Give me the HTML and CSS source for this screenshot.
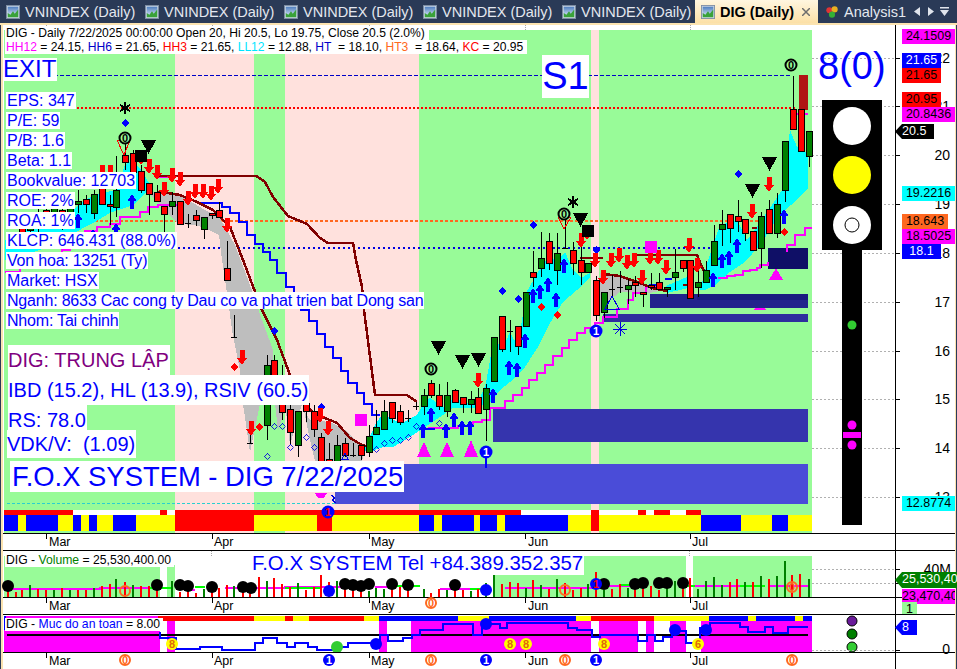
FILE: index.html
```html
<!DOCTYPE html>
<html lang="en">
<head>
<meta charset="utf-8">
<title>DIG (Daily)</title>
<link rel="stylesheet" href="styles.css">
</head>
<body>
<svg class="defs" width="0" height="0" aria-hidden="true">
  <defs>
    <linearGradient id="sky" x1="0" y1="0" x2="0" y2="1"><stop offset="0" stop-color="#4f7fc0"/><stop offset="1" stop-color="#e8f2fb"/></linearGradient>
    <symbol id="chart-icon" viewBox="0 0 16 16">
      <rect x="0.5" y="0.5" width="15" height="15" fill="#c8d4e2" stroke="#7d8da3"/>
      <rect x="2" y="2" width="12" height="12" fill="url(#sky)"/>
      <path d="M2 14V9l3 2 3-4 2 3 4-5v9z" fill="#3aa23a"/>
    </symbol>
    <symbol id="dn" viewBox="0 0 10 15"><path d="M2.500 0h5v8H10l-5 7-5-7h2.500z"/></symbol>
    <symbol id="up" viewBox="0 0 9 15"><path d="M4.500 0l4.500 7H6.500v8h-4V7H0z"/></symbol>
    <symbol id="tri" viewBox="0 0 15 14"><path d="M0 0h15L7.500 14z"/></symbol>
    <symbol id="dia" viewBox="0 0 8 8"><path d="M4 0l4 4-4 4-4-4z"/></symbol>
  </defs>
</svg>

<nav class="tabs">
  <div class="tab"><svg class="tab-icon"><use href="#chart-icon"/></svg><span>VNINDEX (Daily)</span></div>
  <div class="tab"><svg class="tab-icon"><use href="#chart-icon"/></svg><span>VNINDEX (Daily)</span></div>
  <div class="tab"><svg class="tab-icon"><use href="#chart-icon"/></svg><span>VNINDEX (Daily)</span></div>
  <div class="tab"><svg class="tab-icon"><use href="#chart-icon"/></svg><span>VNINDEX (Daily)</span></div>
  <div class="tab"><svg class="tab-icon"><use href="#chart-icon"/></svg><span>VNINDEX (Daily)</span></div>
  <div class="tab tab-active"><svg class="tab-icon"><use href="#chart-icon"/></svg><span>DIG (Daily)</span><svg class="tab-close" viewBox="0 0 8 8"><path d="M0 0l8 8M8 0L0 8"/></svg></div>
  <div class="tab tab-analysis">
    <svg class="tab-icon" viewBox="0 0 16 16"><circle cx="5" cy="6" r="3.500" fill="#e03434"/><circle cx="11" cy="5" r="3.500" fill="#e8b020"/><circle cx="8" cy="11" r="3.500" fill="#35b035"/></svg>
    <span>Analysis1</span>
  </div>
  <svg class="tab-nav" viewBox="0 0 40 10"><path class="nav-glyph" d="M6 0v9L0 4.500zM14 0l6 4.500-6 4.500zM26 0h9v1.500h-9zM26 3h9l-4.500 6z"/></svg>
</nav>

<main class="workspace">
  <div class="charts">

    <section class="pane pane-price">
      <svg class="plot" width="895" height="508" viewBox="0 25 895 508">
        <rect class="bg-green" x="4" y="30" width="808" height="503"/>
        <path class="bg-pink" d="M175 30h79v503h-79zM285 30h134v503H285zM591 30h8v503h-8z"/>
        <path class="grid" d="M812 58.500h82M812 106.500h82M812 155.500h82M812 204.500h82M812 253.500h82M812 302.500h82M812 351.500h82M812 399.500h82M812 448.500h82M812 497.500h82"/>
        <path class="top-ticks" d="M46 25v5M212 25v5M369 25v5M525 25v5M690 25v5"/>

        <rect class="hh-bar" x="799" y="75" width="9" height="35"/>

        <!-- zones -->
        <rect class="zone-e" x="335" y="464" width="473" height="40"/>
        <rect class="zone-d" x="493" y="409" width="315" height="33"/>
        <rect class="zone-c" x="603" y="314" width="205" height="8"/>
        <rect class="zone-b" x="650" y="294" width="158" height="14"/>
        <rect class="zone-b2" x="697" y="294" width="111" height="6"/>
        <rect class="zone-a" x="768" y="248" width="40" height="21"/>

        <!-- level lines -->
        <path class="lv-blue" d="M54 75.500H792"/>
        <path class="lv-red" d="M77 108H796"/>
        <path class="lv-orange" d="M80 220.500H762"/>
        <path class="lv-navy" d="M178 248H720"/>
        <path class="lv-cyan" d="M7 503.500H335"/>

        <!-- channel fills -->
        <path class="fill-cyan" d="M5 240L40 222 70 215 78 205 94 195 116 190 125 165 133 160 141 170 149 183 149 190 133 205 110 213 95 222 70 235 40 250 5 260z"/>
        <path class="fill-cyan" d="M363 447L367 443 375 425 383 413 393 420 402 423 417 415 424 403 430 398 443 407 455 397 463 403 478 403 486 383 494 337 502 350 510 332 518 347 526 293 541 267 549 257 557 260 565 252 573 270 581 278 590 273 590 277 577 290 563 302 550 323 538 347 523 370 510 382 500 390 490 403 473 408 453 408 440 417 410 437 393 447 383 447 367 453z"/>
        <path class="fill-cyan" d="M666 286L687 277 693 287 667 293z"/>
        <path class="fill-cyan" d="M700 290L708 260 720 225 737 220 747 240 757 227 782 190 790 130 797 147 808 153 808 188 797 200 785 210 775 222 760 245 745 262 730 272 715 285 705 290z"/>
        <path class="fill-gray" d="M148 192L165 192 185 198 205 210 220 218 235 245 250 285 262 320 273 350 274 404 243 404 240 370 232 330 228 300 222 260 219 235 205 228 195 225 178 224 160 205z"/>
        <path class="fill-gray" d="M243 404H260L250 452zM275 404H287L278 430zM285 404H302L290 445zM304 411L310 420 330 422 345 430 365 450 362 461 315 461 310 440z"/>
        <path class="fill-gray" d="M600 273L615 275 640 283 664 290 650 293 620 292 610 300 598 315z"/>

        <!-- stepped lines -->
        <path class="ln-magenta" d="M5 272H20V265H35V260H52V254H62V250H70V240H85V231H97V227H110V224H120V217H140V212H148V207H158V205H178"/>
        <path class="ln-magenta" d="M155 177H170V176H195M796 114H808"/>
        <path class="ln-magenta" d="M428 428H458V426H473V422H482V420H490V408H505V401H513V395H522V388H529V380H537V373H545V365H553V356H562V348H569V340H577V333H585V328H595V323H603V317H617V309H628V300H633V293H646V287H658M718 278H727V276H735V275H743V271H750V270H757V268H760V265H768V262M787 252V245H795V235H805V228H812"/>
        <path class="ln-blue" d="M200 203H222V207H230V213H239V222H247V235H255V244H263V252H270V260H277V273H286V287H294V298H301V310H309V321H317V334H325V347H333V358H341V371H348V383H357V393H364V404H372V415H380"/>
        <path class="ln-blue" d="M420 429H435M649 285H660M665 279H672"/>
        <path class="ln-brown" d="M157 176H195H256L265 182 273 197 288 216 307 224 320 238 328 243H353L356 260 362 287 364 310 375 395H407L417 402"/>
        <path class="ln-brown" d="M157 192L167 193 180 195 197 202 213 210 230 227 243 260 262 310 277 340 290 375 308 407 313 413 337 423 350 438 362 445 370 447"/>
        <path class="ln-brown" d="M580 258L603 258M603 274L620 276 640 283 652 288 667 291M635 255H697L702 267 705 273M683 285H693M752 228H757"/>

        <!-- candle wicks -->
        <path class="wick" d="M22 215V240M30 212V235M38 208V232M46 205V228M54 200V225M62 205V230M70 198V225M78 190V213M86 195V213M94 190V219M102 183V204M110 195V225M116 156V217M125 135V170M133 150V172M141 165V193M149 183V215M157 185V201M164 206V232M172 192V215M180 201V224M188 214V228M185 223h6M196 210V226M204 217V239M212 213V219M219 202V217M227 241V280M234 315V337M231 337h6M250 430V443M247 443h6M267 355V440M274 355V395M282 365V420M290 395V445M298 411V457M306 395V422M314 405V437M321 433V480M329 443V480M337 435V480M345 438V457M353 443V457M350 455h6M361 445V460M369 425V457M376 410V434M384 400V429M392 402V423M400 405V425M408 410V422M405 418h6M416 402V410M413 406h6M424 389V415M431 380V398M439 384V410M447 382V417M455 389V402M463 397V413M471 391V413M478 388V413M486 384V441M502 316V352M510 320V352M507 331h6M518 326V355M533 251V287M541 232V277M549 233V270M557 233V285M565 217V248M562 248h6M573 242V275M581 245V285M596 276V321M604 292V318M612 275V297M609 289h6M620 271V293M617 287h6M628 279V304M635 276V297M643 292V307M651 273V290M659 273V290M667 287V297M675 249V290M683 260V272M690 260V299M698 270V297M706 261V283M714 225V265M722 210V246M730 214V243M738 200V232M745 219V241M761 212V268M769 200V233M777 193V238M785 141V202M793 76V129M809 131V167"/>
        <path class="body-green" d="M27 218h6V230h-6zM51 208h6V220h-6zM67 205h6V218h-6zM75 201h6V204h-6zM91 194h6V213h-6zM113 190h6V207h-6zM169 201h6V206h-6zM201 217h6V229h-6zM264 365h6V425h-6zM295 411h6V445h-6zM334 445h6V475h-6zM366 436h6V452h-6zM373 427h6V434h-6zM381 411h6V429h-6zM421 395h6V406h-6zM444 395h6V411h-6zM468 399h6V404h-6zM483 388h6V409h-6zM491 337h6V381h-6zM523 292h6V326h-6zM538 258h6V268h-6zM554 253h6V270h-6zM585 263h6V272h-6zM601 292h6V312h-6zM625 285h6V289h-6zM664 287h6V289h-6zM672 272h6V277h-6zM695 282h6V287h-6zM703 270h6V282h-6zM711 241h6V265h-6zM719 224h6V229h-6zM758 216h6V248h-6zM774 204h6V233h-6zM782 141h6V190h-6zM806 131h6V156h-6z"/>
        <path class="body-red" d="M19 222h6V232h-6zM35 215h6V228h-6zM43 210h6V224h-6zM59 210h6V225h-6zM83 199h6V204h-6zM99 187h6V204h-6zM107 204h6V206h-6zM122 155h6V162h-6zM130 153h6V172h-6zM138 171h6V190h-6zM146 183h6V194h-6zM154 192h6V201h-6zM161 206h6V214h-6zM177 201h6V224h-6zM193 215h6V220h-6zM209 213h6V215h-6zM216 210h6V217h-6zM224 268h6V280h-6zM271 360h6V395h-6zM279 403h6V412h-6zM287 409h6V432h-6zM303 403h6V411h-6zM311 411h6V429h-6zM318 437h6V480h-6zM326 459h6V480h-6zM342 443h6V455h-6zM358 445h6V455h-6zM389 402h6V418h-6zM397 411h6V422h-6zM428 383h6V395h-6zM436 395h6V406h-6zM452 390h6V402h-6zM460 397h6V404h-6zM475 397h6V413h-6zM499 316h6V349h-6zM515 326h6V346h-6zM530 272h6V277h-6zM546 241h6V263h-6zM570 250h6V263h-6zM578 260h6V272h-6zM593 280h6V315h-6zM632 282h6V285h-6zM640 292h6V294h-6zM648 285h6V287h-6zM656 282h6V289h-6zM680 260h6V268h-6zM687 260h6V298h-6zM727 214h6V228h-6zM735 216h6V221h-6zM742 219h6V233h-6zM750 231h6V250h-6zM766 209h6V233h-6zM790 109h6V129h-6zM798 109h6V151h-6z"/>

        <!-- blue up arrows -->
        <g class="sym-blue">
          <use href="#up" x="127.500" y="194" width="9" height="15"/><use href="#up" x="73.500" y="213" width="9" height="15"/><use href="#up" x="111.500" y="223" width="9" height="15"/><use href="#up" x="88.500" y="229" width="9" height="15"/>
          <use href="#up" x="426.500" y="407" width="9" height="15"/><use href="#up" x="418.500" y="423" width="9" height="15"/><use href="#up" x="441.500" y="423" width="9" height="15"/><use href="#up" x="449.500" y="412" width="9" height="15"/><use href="#up" x="457.500" y="420" width="9" height="15"/><use href="#up" x="465.500" y="420" width="9" height="15"/><use href="#up" x="488.500" y="388" width="9" height="15"/><use href="#up" x="504.500" y="360" width="9" height="15"/><use href="#up" x="512.500" y="362" width="9" height="15"/><use href="#up" x="520.500" y="333" width="9" height="15"/><use href="#up" x="528.500" y="288" width="9" height="15"/><use href="#up" x="535.500" y="284" width="9" height="15"/><use href="#up" x="543.500" y="277" width="9" height="15"/><use href="#up" x="551.500" y="292" width="9" height="15"/><use href="#up" x="559.500" y="258" width="9" height="15"/>
          <use href="#up" x="708.500" y="272" width="9" height="15"/><use href="#up" x="717.500" y="253" width="9" height="15"/><use href="#up" x="724.500" y="250" width="9" height="15"/><use href="#up" x="732.500" y="238" width="9" height="15"/><use href="#up" x="779.500" y="209" width="9" height="15"/>
          <use href="#dia" x="121" y="119" width="8" height="8"/><use href="#dia" x="529" y="221" width="8" height="8"/><use href="#dia" x="498" y="287" width="8" height="8"/><use href="#dia" x="514" y="295" width="8" height="8"/><use href="#dia" x="734" y="170" width="8" height="8"/><use href="#dia" x="592" y="246" width="8" height="8"/><use href="#dia" x="270" y="327" width="8" height="8"/><use href="#dia" x="317" y="403" width="8" height="8"/>
        </g>

        <!-- red down arrows -->
        <g class="sym-red">
          <use href="#dn" x="136" y="150" width="10" height="15"/><use href="#dn" x="144" y="159" width="10" height="15"/><use href="#dn" x="152" y="165" width="10" height="15"/><use href="#dn" x="159" y="182" width="10" height="15"/><use href="#dn" x="167" y="168" width="10" height="15"/><use href="#dn" x="175" y="172" width="10" height="15"/><use href="#dn" x="183" y="191" width="10" height="15"/><use href="#dn" x="190" y="184" width="10" height="15"/><use href="#dn" x="198" y="184" width="10" height="15"/><use href="#dn" x="206" y="186" width="10" height="15"/><use href="#dn" x="213" y="179" width="10" height="15"/><use href="#dn" x="222" y="218" width="10" height="15"/><use href="#dn" x="97" y="165" width="10" height="15"/><use href="#dn" x="105" y="165" width="10" height="15"/><use href="#dn" x="237" y="350" width="10" height="15"/><use href="#dn" x="246" y="421" width="10" height="15"/><use href="#dn" x="315" y="408" width="10" height="15"/><use href="#dn" x="323" y="421" width="10" height="15"/><use href="#dn" x="473" y="373" width="10" height="15"/><use href="#dn" x="582" y="225" width="10" height="15"/><use href="#dn" x="576" y="233" width="10" height="15"/><use href="#dn" x="590" y="253" width="10" height="15"/><use href="#dn" x="606" y="253" width="10" height="15"/><use href="#dn" x="614" y="248" width="10" height="15"/><use href="#dn" x="622" y="255" width="10" height="15"/><use href="#dn" x="629" y="253" width="10" height="15"/><use href="#dn" x="645" y="250" width="10" height="15"/><use href="#dn" x="653" y="250" width="10" height="15"/><use href="#dn" x="661" y="260" width="10" height="15"/><use href="#dn" x="637" y="270" width="10" height="15"/><use href="#dn" x="598" y="270" width="10" height="15"/><use href="#dn" x="684" y="238" width="10" height="15"/><use href="#dn" x="692" y="258" width="10" height="15"/><use href="#dn" x="747" y="204" width="10" height="15"/><use href="#dn" x="764" y="177" width="10" height="15"/>
          <use href="#dia" x="537" y="303" width="8" height="8"/><use href="#dia" x="553" y="311" width="8" height="8"/><use href="#dia" x="780" y="228" width="8" height="8"/><use href="#dia" x="230" y="363" width="8" height="8"/><use href="#dia" x="255" y="423" width="8" height="8"/>
        </g>

        <!-- hollow diamonds -->
        <g class="sym-hollow">
          <use href="#dia" x="270.500" y="422.500" width="7" height="7"/><use href="#dia" x="278.500" y="422.500" width="7" height="7"/><use href="#dia" x="286.500" y="443.500" width="7" height="7"/><use href="#dia" x="263.500" y="452.500" width="7" height="7"/><use href="#dia" x="302.500" y="433.500" width="7" height="7"/><use href="#dia" x="310.500" y="443.500" width="7" height="7"/><use href="#dia" x="372.500" y="445.500" width="7" height="7"/><use href="#dia" x="380.500" y="439.500" width="7" height="7"/><use href="#dia" x="388.500" y="436.500" width="7" height="7"/><use href="#dia" x="396.500" y="436.500" width="7" height="7"/><use href="#dia" x="404.500" y="433.500" width="7" height="7"/><use href="#dia" x="412.500" y="422.500" width="7" height="7"/><use href="#dia" x="435.500" y="419.500" width="7" height="7"/>
        </g>

        <!-- black triangles and squares -->
        <g class="sym-black">
          <rect x="135" y="150" width="12" height="12"/><rect x="582" y="225" width="12" height="12"/>
          <use href="#tri" x="141" y="140" width="15" height="14"/><use href="#tri" x="431" y="341" width="15" height="14"/><use href="#tri" x="455" y="355" width="15" height="14"/><use href="#tri" x="471" y="353" width="15" height="14"/><use href="#tri" x="573" y="213" width="15" height="14"/><use href="#tri" x="745" y="184" width="15" height="14"/><use href="#tri" x="762" y="157" width="15" height="14"/>
        </g>
        <path class="tri-red" d="M117 140h13l-6 15zM558 217h13l-7 12z"/>
        <path class="asterisk" d="M125 102v12M120 105l10 6M130 105l-10 6M573 196v12M568 199l10 6M578 199l-10 6"/>

        <!-- magenta marks -->
        <g class="sym-magenta">
          <rect x="355" y="414" width="12" height="12"/><rect x="645" y="241" width="12" height="12"/>
          <path d="M417 457l7-15 7 15zM440 457l7-15 7 15zM464 457l7-17 7 17zM769 280l7-12 7 12zM753 310l3-2h8l3 2zM315 493h12l-3 5h-6z"/>
        </g>

        <!-- outline marks -->
        <path class="outline-blue" d="M612 296l7 13h-14zM620 322v14M613 329h14M615 324l10 10M625 324l-10 10M345 453l3 6h-6zM331 495l4 3-3 2 4 3"/>
        <path class="ln-blue" d="M486 456v12"/>

        <g class="badge-ring"><circle cx="125" cy="138" r="5.500"/><circle cx="431" cy="369" r="5.500"/><circle cx="564" cy="214" r="5.500"/><circle cx="791" cy="65" r="5.500"/></g>
        <g class="badge-ring-text"><text x="125" y="142">0</text><text x="431" y="373">0</text><text x="564" y="218">0</text><text x="791" y="69">0</text></g>

        <g class="badge-blue"><circle cx="596" cy="331" r="6.500"/><circle cx="486" cy="452" r="6.500"/></g>
        <g class="badge-blue-text"><text x="596" y="335">1</text><text x="486" y="456">1</text></g>

        <!-- signal ribbon -->
        <path class="rib-red" d="M4 510h69v5H4zM160 510h7v5h-7zM175 510h346v5H175zM591 510h8v21h-8zM638 510h8v5h-8zM654 510h16v5h-16zM686 510h15v5h-15zM175 515h79v16h-79zM317 515h15v16h-15z"/>
        <path class="rib-white" d="M73 510h87v5H73zM167 510h8v5h-8zM521 510h70v5h-70zM599 510h39v5h-39zM646 510h8v5h-8zM670 510h16v5h-16z"/>
        <path class="rib-blue" d="M4 515h14v16H4zM26 515h32v16H26zM73 515h8v16h-8zM89 515h8v16h-8zM113 515h23v16h-23zM419 515h15v16h-15zM442 515h32v16h-32zM480 515h17v16h-17zM505 515h63v16h-63zM701 515h40v16h-40zM772 515h16v16h-16z"/>
        <path class="rib-yellow" d="M18 515h8v16h-8zM58 515h15v16H58zM81 515h8v16h-8zM97 515h16v16H97zM136 515h39v16h-39zM254 515h63v16h-63zM332 515h87v16h-87zM434 515h8v16h-8zM474 515h6v16h-6zM497 515h8v16h-8zM568 515h23v16h-23zM599 515h102v16H599zM741 515h31v16h-31zM788 515h24v16h-24z"/>
        <g class="badge-blue"><circle cx="328" cy="512" r="6.500"/></g>
        <g class="badge-red-text"><text x="328" y="516">1</text></g>

        <!-- traffic light -->
        <rect class="light-frame" x="822" y="100" width="60" height="150"/>
        <rect class="light-frame" x="842" y="250" width="20" height="275"/>
        <circle class="light-white" cx="852" cy="126" r="19"/>
        <circle class="light-yellow" cx="852" cy="175" r="19"/>
        <circle class="light-white" cx="852" cy="225" r="19"/>
        <circle class="light-ring" cx="852" cy="225" r="7"/>
        <circle class="light-lime" cx="852" cy="325" r="4.500"/>
        <circle class="light-magenta" cx="852" cy="425" r="4.500"/>
        <rect class="light-magenta" x="843" y="432" width="18" height="6"/>
        <circle class="light-magenta" cx="852" cy="445" r="4.500"/>
      </svg>

      <div class="chart-head">
        <div class="chart-head-line">DIG - Daily 7/22/2025 00:00:00 Open 20, Hi 20.5, Lo 19.75, Close 20.5 (2.0%)</div>
        <div class="chart-head-line"><span class="c-magenta">HH12</span> = 24.15, <span class="c-navy">HH6</span> = 21.65, <span class="c-red">HH3</span> = 21.65, <span class="c-cyan">LL12</span> = 12.88, <span class="c-navy">HT </span> = 18.10, <span class="c-orange">HT3 </span> = 18.64, <span class="c-red">KC</span> = 20.95</div>
      </div>
      <div class="tag-exit">EXIT</div>
      <div class="tag-s1">S1</div>
      <div class="tag-count">8(0)</div>

      <ul class="stats">
        <li>EPS: 347</li>
        <li>P/E: 59</li>
        <li>P/B: 1.6</li>
        <li>Beta: 1.1</li>
        <li>Bookvalue: 12703</li>
        <li>ROE: 2%</li>
        <li>ROA: 1%</li>
        <li>KLCP: 646.431 (88.0%)</li>
        <li class="stats-tight">Von hoa: 13251 (Ty)</li>
        <li>Market: HSX</li>
        <li class="stats-tight">Nganh: 8633 Cac cong ty Dau co va phat trien bat Dong san</li>
        <li class="stats-tight">Nhom: Tai chinh</li>
      </ul>

      <div class="verdict">
        <div class="verdict-line verdict-title">DIG: TRUNG LẬP</div>
        <div class="verdict-line">IBD (15.2), HL (13.9), RSIV (60.5)</div>
        <div class="verdict-line">RS: 78.0</div>
        <div class="verdict-line verdict-last">VDK/V:  (1.09)</div>
      </div>
      <div class="brand">F.O.X SYSTEM - DIG 7/22/2025</div>
    </section>

    <svg class="plot" width="895" height="17" viewBox="0 533 895 17">
      <path class="rule" d="M3 533.500H895"/>
      <path class="rule" d="M46 534v5M212 534v5M369 534v5M525 534v5M690 534v5"/>
      <g class="month"><text x="49" y="546">Mar</text><text x="214" y="546">Apr</text><text x="371" y="546">May</text><text x="528" y="546">Jun</text><text x="692" y="546">Jul</text></g>
    </svg>

    <section class="pane pane-volume">
      <svg class="plot" width="895" height="47" viewBox="0 550 895 47">
        <path class="rule" d="M3 550.500H895"/>
        <path class="bg-green" d="M4 556h156v41H4zM167 565h8v32h-8zM494 556h192v41H494zM693 556h119v41H693z"/>
        <path class="grid" d="M812 569.500h82M812 583.500h82"/>
        <path class="top-ticks" d="M211 551v5M689 551v5"/>
        <path class="vol-line-m" d="M4 589H100V588H150M185 590H195M225 588H285V587H345M375 587H395M440 589H480M505 588H600V586H630M695 586H740M770 586H810"/>
        <path class="vol-line-g" d="M150 588H172M195 587H205M285 588H320M395 586H420M470 589H490M620 585H640M680 586H695M740 586H765"/>
        <path class="vol-green" d="M30 585V597M54 590V597M70 590V597M94 588V597M116 579V597M133 585V597M172 581V597M204 589V597M234 586V597M267 581V597M298 583V597M337 581V597M369 591V597M376 588V597M384 589V597M424 589V597M447 590V597M471 591V597M486 583V597M494 575V597M526 588V597M541 585V597M557 579V597M588 584V597M604 590V597M628 588V597M667 587V597M675 581V597M698 589V597M706 581V597M714 577V597M722 585V597M745 582V597M761 576V597M777 576V597M785 561V597M809 579V597"/>
        <path class="vol-red" d="M8 591V597M16 592V597M22 590V597M38 589V597M46 590V597M62 588V597M78 590V597M86 590V597M102 586V597M110 584V597M125 582V597M141 586V597M149 586V597M157 588V597M180 592V597M188 591V597M196 593V597M212 590V597M219 588V597M227 585V597M243 586V597M250 583V597M259 577V597M274 578V597M282 584V597M290 587V597M306 590V597M314 587V597M321 575V597M329 582V597M345 586V597M353 587V597M361 588V597M392 589V597M400 587V597M408 590V597M431 593V597M439 589V597M455 586V597M463 590V597M478 589V597M502 584V597M510 582V597M518 583V597M533 580V597M549 589V597M565 583V597M573 590V597M581 588V597M596 572V597M612 589V597M620 584V597M635 586V597M643 587V597M651 586V597M659 590V597M683 582V597M690 578V597M730 582V597M737 579V597M753 582V597M769 579V597M792 575V597M800 574V597"/>
        <g class="blobs"><circle cx="8" cy="586" r="6"/><circle cx="157" cy="585" r="6"/><circle cx="180" cy="585" r="6"/><circle cx="188" cy="586" r="6"/><circle cx="212" cy="587" r="6"/><circle cx="243" cy="587" r="6"/><circle cx="251" cy="588" r="6"/><circle cx="345" cy="584" r="6"/><circle cx="353" cy="585" r="6"/><circle cx="361" cy="586" r="6"/><circle cx="369" cy="584" r="6"/><circle cx="392" cy="584" r="6"/><circle cx="408" cy="585" r="6"/><circle cx="455" cy="585" r="6"/><circle cx="604" cy="584" r="6"/><circle cx="635" cy="584" r="6"/><circle cx="643" cy="583" r="6"/><circle cx="659" cy="583" r="6"/><circle cx="667" cy="583" r="6"/><circle cx="683" cy="583" r="6"/></g>
        <g class="badge-orange-hollow"><circle cx="125" cy="591" r="5"/><circle cx="565" cy="590" r="5"/><circle cx="792" cy="587" r="5"/></g>
        <g class="badge-orange-text"><text x="792" y="591">0</text></g>
        <g class="badge-blue"><circle cx="329" cy="591" r="6"/><circle cx="486" cy="590" r="6"/><circle cx="596" cy="584" r="6"/></g>
        <g class="badge-red-text"><text x="596" y="588">1</text></g>
      </svg>
      <div class="legend legend-volume">DIG - <span class="c-green">Volume</span> = 25,530,400.00</div>
      <div class="tag-tel">F.O.X SYSTEM Tel +84.389.352.357</div>
    </section>

    <svg class="plot" width="895" height="17" viewBox="0 597 895 17">
      <path class="rule" d="M3 597.500H895"/>
      <path class="rule" d="M46 598v5M212 598v5M369 598v5M525 598v5M690 598v5"/>
      <g class="month"><text x="49" y="610">Mar</text><text x="214" y="610">Apr</text><text x="371" y="610">May</text><text x="528" y="610">Jun</text><text x="692" y="610">Jul</text></g>
      <g class="badge-orange"><circle cx="431" cy="603" r="5"/></g>
      <g class="badge-orange-text"><text x="431" y="607">0</text></g>
    </svg>

    <section class="pane pane-safety">
      <svg class="plot" width="895" height="38" viewBox="0 614 895 38">
        <path class="rule" d="M3 614.500H895"/>
        <path class="safe-magenta" d="M4 616h156v36H4zM167 620h8v32h-8zM379 620h8v32h-8zM411 620h180v32H411zM599 620h39v32h-39zM646 620h8v32h-8zM670 620h16v32h-16zM701 620h111v32H701z"/>
        <path class="rib-red" d="M158 616h96v5h-96zM285 616h8v5h-8zM309 616h55v5h-55zM591 616h63v5h-63z"/>
        <path class="rib-yellow" d="M254 616h31v5h-31zM293 616h16v5h-16zM364 616h15v5h-15zM458 616h31v5h-31zM576 616h15v5h-15zM654 616h55v5h-55zM748 616h8v5h-8zM795 616h8v5h-8z"/>
        <path class="rib-blue" d="M379 616h79v5h-79zM489 616h87v5h-87zM709 616h39v5h-39zM756 616h39v5h-39zM803 616h9v5h-9z"/>
        <path class="safe-axis" d="M7 634.500H808"/>
        <path class="safe-line" d="M160 632V638H176V649H200V647H222V650H255V643H263V638H277V643H287V647H295V643H308V647H317V650H335V647H348V643H380V635H388V641H403V638H412V635H420V630H443V624H473V635H482V624H500V628H507V623H568V628H577V630H592V637H600V635H638V641H647V635H655V641H663V637H672V631H686V643H700V628H710V623H740V627H748V632H765V627H773V633H788V627H808"/>
        <circle class="safe-dot-lime" cx="337" cy="647" r="6"/>
        <g class="badge-blue"><circle cx="376" cy="644" r="6"/><circle cx="486" cy="624" r="6"/><circle cx="675" cy="630" r="6"/><circle cx="706" cy="630" r="6"/></g>
        <g class="badge-yellow"><circle cx="172" cy="644" r="6"/><circle cx="510" cy="644" r="6"/><circle cx="526" cy="644" r="6"/><circle cx="604" cy="644" r="6"/><circle cx="698" cy="644" r="6"/></g>
        <g class="badge-yellow-text"><text x="172" y="648">8</text><text x="510" y="648">8</text><text x="526" y="648">8</text><text x="604" y="648">8</text><text x="698" y="648">6</text></g>
        <rect class="safe-dot-blue" x="4" y="616" width="2" height="14"/>
        <circle class="side-purple" cx="852" cy="621" r="5"/>
        <circle class="side-green" cx="852" cy="634" r="5"/>
        <circle class="side-lime" cx="852" cy="647" r="5"/>
        <path class="grid" d="M812 650.500h82"/>
      </svg>
      <div class="legend legend-safety">DIG - <span class="c-blue">Muc do an toan</span> = 8.00</div>
    </section>

    <svg class="plot" width="895" height="17" viewBox="0 652 895 17">
      <path class="rule" d="M3 652.500H895"/>
      <path class="rule" d="M46 653v5M212 653v5M369 653v5M525 653v5M690 653v5"/>
      <g class="month"><text x="49" y="665">Mar</text><text x="214" y="665">Apr</text><text x="371" y="665">May</text><text x="528" y="665">Jun</text><text x="692" y="665">Jul</text></g>
      <g class="badge-orange"><circle cx="125" cy="660" r="5"/><circle cx="431" cy="660" r="5"/><circle cx="565" cy="660" r="5"/><circle cx="792" cy="660" r="5"/></g>
      <g class="badge-orange-text"><text x="125" y="664">0</text><text x="431" y="664">0</text><text x="565" y="664">0</text><text x="792" y="664">0</text></g>
      <g class="badge-blue"><circle cx="329" cy="660" r="6"/><circle cx="486" cy="660" r="6"/><circle cx="596" cy="660" r="6"/></g>
      <g class="badge-blue-text"><text x="329" y="664">1</text><text x="486" y="664">1</text><text x="596" y="664">1</text></g>
    </svg>
  </div>

  <aside class="scale">
    <svg class="plot" width="62" height="644" viewBox="895 25 62 644">
      <path class="rule-strong" d="M895 25V669"/>
      <path class="rule" d="M895 533.500H955M895 550.500H955M895 597.500H955M895 614.500H955M895 652.500H955"/>
      <path class="rule" d="M895 58.500h5M895 106.500h5M895 155.500h5M895 204.500h5M895 253.500h5M895 302.500h5M895 351.500h5M895 399.500h5M895 448.500h5M895 497.500h5M895 569.500h5M895 583.500h5M895 650.500h5"/>
      <g class="scale-num">
        <text x="950" y="63">22</text><text x="950" y="111">21</text><text x="950" y="160">20</text><text x="950" y="209">19</text><text x="950" y="258">18</text><text x="950" y="307">17</text><text x="950" y="356">16</text><text x="950" y="404">15</text><text x="950" y="453">14</text><text x="950" y="502">13</text><text x="951" y="574">40M</text><text x="950" y="654">0</text>
      </g>
    </svg>
    <span class="chip chip-magenta chip-wide at-24150">24.1509</span>
    <span class="chip chip-blue at-2165a">21.65</span>
    <span class="chip chip-red at-2165b">21.65</span>
    <span class="chip chip-red at-2095">20.95</span>
    <span class="chip chip-magenta chip-wide at-2084">20.8436</span>
    <span class="chip chip-flag chip-black at-205">20.5</span>
    <span class="chip chip-cyan chip-wide at-1922">19.2216</span>
    <span class="chip chip-orange chip-mid at-1864">18.643</span>
    <span class="chip chip-magenta chip-wide at-1850">18.5025</span>
    <span class="chip chip-blue at-181">18.1</span>
    <span class="chip chip-cyan chip-wide at-1287">12.8774</span>
    <span class="chip chip-flag chip-flag-wide chip-green at-vol">25,530,40</span>
    <span class="chip chip-magenta chip-wide chip-clip at-avg">23,470,40</span>
    <span class="chip chip-mint at-one">1</span>
    <span class="chip chip-flag chip-flag-small chip-blue at-safe">8</span>
  </aside>
</main>
</body>
</html>
```

FILE: styles.css
```css
* { box-sizing: border-box; }
html, body { margin: 0; padding: 0; }
body {
  width: 957px;
  height: 669px;
  overflow: hidden;
  background: #fff;
  font-family: "Liberation Sans", Arial, sans-serif;
  color: #000;
}
.defs { position: absolute; }

/* tab strip */
.tabs {
  display: flex;
  align-items: center;
  height: 25px;
  background: #2a3a57;
  border-bottom: 2px solid #fbe3b0;
  color: #e4e8ef;
  font-size: 14.5px;
  white-space: nowrap;
}
.tab {
  display: flex;
  align-items: center;
  gap: 5px;
  width: 139px;
  height: 23px;
  padding-left: 6px;
  flex: none;
}
.tab-icon { width: 14px; height: 14px; flex: none; }
.tab-active {
  width: 123px;
  background: linear-gradient(#fff6e0, #fce0a6);
  color: #000;
  font-weight: 700;
}
.tab-close { width: 8px; height: 8px; margin-left: 3px; }
.tab-close path { stroke: #6d6d6d; stroke-width: 1.500; fill: none; }
.tab-analysis { width: auto; padding-left: 7px; }
.tab-nav { width: 40px; height: 10px; margin-left: auto; margin-right: 3px; flex: none; }
.nav-glyph { fill: #dfe4ec; }

/* workspace */
.workspace {
  display: grid;
  grid-template-columns: 895px 62px;
  height: 644px;
  box-shadow: inset 1px 0 #2a3a57, inset 3px 0 #fbe3b0, inset -1px 0 #2a3a57, inset -2px 0 #fbe3b0;
}
.charts { display: flex; flex-direction: column; }
.pane { position: relative; }
.pane-price { height: 508px; }
.pane-volume { height: 47px; }
.pane-safety { height: 38px; }
.plot { display: block; shape-rendering: crispEdges; }
.plot circle { shape-rendering: geometricPrecision; }

/* plot backgrounds */
.bg-green { fill: #98fb98; }
.bg-pink { fill: #ffe1dd; }
.grid { stroke: #b0b0b0; stroke-dasharray: 2 2; fill: none; }
.top-ticks { stroke: #a8a8a8; stroke-dasharray: 1 1; fill: none; }
.hh-bar { fill: #b01414; }
.zone-e { fill: #4a4cd8; }
.zone-d { fill: #3534ad; }
.zone-c { fill: #2e2e9e; }
.zone-b { fill: #23238c; }
.zone-b2 { fill: #1a1a80; }
.zone-a { fill: #0f0f66; }

/* level lines */
.lv-blue { stroke: #0000c8; stroke-dasharray: 4 2; fill: none; }
.lv-red { stroke: #f00; stroke-width: 2; stroke-dasharray: 2 2; fill: none; }
.lv-orange { stroke: #ff6820; stroke-width: 2; stroke-dasharray: 3 2; fill: none; }
.lv-navy { stroke: #0000e0; stroke-width: 2; stroke-dasharray: 2 3; fill: none; }
.lv-cyan { stroke: #28d0d0; stroke-dasharray: 3 2; fill: none; }

/* channels */
.fill-cyan { fill: #0ff; }
.fill-gray { fill: #bebebe; }
.ln-magenta { stroke: #f0f; stroke-width: 2; fill: none; }
.ln-blue { stroke: #00f; stroke-width: 2; fill: none; }
.ln-brown { stroke: #800000; stroke-width: 2.500; fill: none; }

/* candles */
.wick { stroke: #000; fill: none; }
.body-green { fill: #008000; stroke: #000; }
.body-red { fill: #f00; stroke: #000; }

/* markers */
.sym-blue { fill: #00f; }
.sym-red { fill: #f00; }
.sym-black { fill: #000; }
.sym-magenta { fill: #f0f; }
.sym-hollow { fill: none; stroke: #0000e0; }
.tri-red { fill: none; stroke: #f00; }
.asterisk { stroke: #000; stroke-width: 2; fill: none; }
.outline-blue { fill: none; stroke: #0000e0; }

.badge-ring circle { fill: #98fb98; stroke: #000; stroke-width: 2; }
.badge-blue circle { fill: #00f; }
.badge-orange circle { fill: #fff; stroke: #ff6820; stroke-width: 2; }
.badge-orange-hollow circle { fill: none; stroke: #ff6820; stroke-width: 2; }
.badge-yellow circle { fill: #ff0; }

.badge-ring-text text,
.badge-blue-text text,
.badge-red-text text,
.badge-orange-text text,
.badge-yellow-text text {
  font-size: 11px;
  font-weight: 700;
  text-anchor: middle;
}
.badge-ring-text text { fill: #000; }
.badge-blue-text text { fill: #fff; }
.badge-red-text text { fill: #f00; }
.badge-orange-text text { fill: #ff6820; }
.badge-yellow-text text { fill: #e0680a; }

/* ribbons */
.rib-red { fill: #f00; }
.rib-white { fill: #fff; }
.rib-blue { fill: #00f; }
.rib-yellow { fill: #ff0; }

/* traffic light */
.light-frame { fill: #000; }
.light-white { fill: #fff; }
.light-yellow { fill: #ff0; }
.light-ring { fill: none; stroke: #000; }
.light-lime { fill: #32cd32; }
.light-magenta { fill: #f0f; }

/* overlays on the price pane */
.chart-head {
  position: absolute;
  left: 5px;
  top: 1px;
  font-size: 12.1px;
  line-height: 14px;
}
.chart-head-line { width: fit-content; background: #fff; padding: 0 4px 0 1px; white-space: pre; }
.c-magenta { color: #f0f; }
.c-navy { color: #0000c8; }
.c-red { color: #f00; }
.c-cyan { color: #00e5ff; }
.c-orange { color: #ff6820; }
.c-green { color: #008000; }
.c-blue { color: #00f; }

.tag-exit {
  position: absolute;
  left: 3px;
  top: 33px;
  height: 23px;
  padding-right: 1px;
  background: #fff;
  color: #00f;
  font-size: 24px;
  line-height: 22px;
}
.tag-s1 {
  position: absolute;
  left: 542px;
  top: 30px;
  width: 47px;
  height: 43px;
  background: #fff;
  color: #00f;
  font-size: 38px;
  line-height: 43px;
  text-align: center;
}
.tag-count {
  position: absolute;
  left: 818px;
  top: 22px;
  color: #00f;
  font-size: 38px;
  line-height: 38px;
}
.stats {
  position: absolute;
  left: 6px;
  top: 67px;
  margin: 0;
  padding: 0;
  list-style: none;
  display: flex;
  flex-direction: column;
  gap: 3px;
  align-items: flex-start;
  color: #00f;
  font-size: 16px;
  line-height: 17px;
  white-space: nowrap;
}
.stats li { background: #fff; padding: 0 1px; }
.stats .stats-tight { letter-spacing: -0.2px; }
.verdict {
  position: absolute;
  left: 8px;
  top: 320px;
  display: flex;
  flex-direction: column;
  align-items: flex-start;
  color: #00f;
  font-size: 20px;
  line-height: 30px;
  white-space: pre;
}
.verdict-line { background: #fff; padding-right: 1px; }
.verdict-title { color: #800080; }
.verdict-last { margin-top: -5px; margin-left: -1px; line-height: 28px; }
.brand {
  position: absolute;
  left: 10px;
  top: 436px;
  height: 31px;
  padding: 0 1px 0 2px;
  background: #fff;
  color: #00f;
  font-size: 27.4px;
  line-height: 31px;
  white-space: nowrap;
}

/* rules and axes */
.rule { stroke: #000; fill: none; }
.rule-strong { stroke: #000; stroke-width: 2; fill: none; }
.month text { font-size: 12.5px; fill: #000; }

/* volume */
.vol-green { stroke: #008000; stroke-width: 2; fill: none; }
.vol-red { stroke: #f00; stroke-width: 2; fill: none; }
.vol-line-m { stroke: #f0f; stroke-width: 2; fill: none; }
.vol-line-g { stroke: #0f0; stroke-width: 2; fill: none; }
.blobs { fill: #000; }
.legend {
  position: absolute;
  left: 5px;
  padding: 0 3px 0 1px;
  background: #fff;
  font-size: 12.2px;
  line-height: 13px;
  white-space: nowrap;
}
.legend-volume { top: 4px; }
.legend-safety { top: 4px; }
.tag-tel {
  position: absolute;
  left: 252px;
  top: 2px;
  height: 23px;
  padding-right: 1px;
  background: #fff;
  color: #00f;
  font-size: 20.4px;
  line-height: 23px;
  white-space: nowrap;
}

/* safety */
.safe-magenta { fill: #f0f; }
.safe-axis { stroke: #000; stroke-width: 2; fill: none; }
.safe-line { stroke: #00f; stroke-width: 2; fill: none; }
.safe-dot-lime { fill: #32cd32; }
.safe-dot-blue { fill: #00f; }
.side-purple { fill: #6a1b9a; stroke: #000; }
.side-green { fill: #008000; stroke: #000; }
.side-lime { fill: #32cd32; stroke: #000; }

/* value scale */
.scale { position: relative; overflow: hidden; }
.scale-num text { font-size: 14px; text-anchor: end; fill: #000; }
.chip {
  position: absolute;
  left: 7px;
  width: 39px;
  height: 15px;
  font-size: 12.5px;
  line-height: 15px;
  text-align: center;
  white-space: nowrap;
  overflow: hidden;
}
.chip-wide { width: 53px; }
.chip-mid { width: 46px; }
.chip-magenta { background: #f0f; color: #000; }
.chip-blue { background: #00f; color: #fff; }
.chip-red { background: #f00; color: #000; }
.chip-cyan { background: #0ff; color: #000; }
.chip-orange { background: #ff6820; color: #000; }
.chip-black { background: #000; color: #fff; }
.chip-green { background: #008000; color: #fff; }
.chip-mint { background: #98fb98; color: #000; width: 15px; }
.chip-clip { text-align: left; }
.chip-flag {
  left: 0;
  padding-left: 7px;
  text-align: left;
  clip-path: polygon(7px 0, 100% 0, 100% 100%, 7px 100%, 0 50%);
}
.chip-flag-wide { width: 62px; height: 16px; }
.chip-flag-small { width: 22px; }

.at-24150 { top: 4px; }
.at-2165a { top: 28px; }
.at-2165b { top: 43px; }
.at-2095 { top: 67px; }
.at-2084 { top: 82px; }
.at-205 { top: 99px; }
.at-1922 { top: 161px; }
.at-1864 { top: 189px; }
.at-1850 { top: 204px; }
.at-181 { top: 219px; }
.at-1287 { top: 471px; }
.at-vol { top: 547px; }
.at-avg { top: 564px; }
.at-one { top: 577px; height: 12px; }
.at-safe { top: 595px; }
```
